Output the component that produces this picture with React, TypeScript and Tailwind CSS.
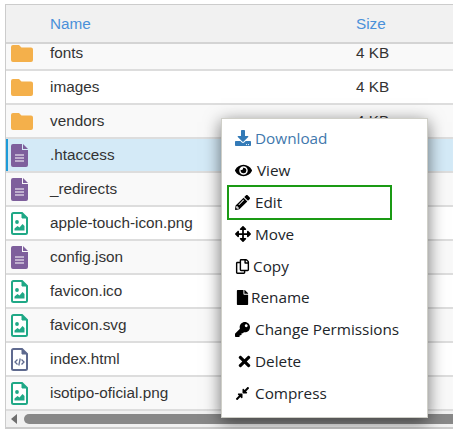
import React from "react";
import { FaDownload, FaEye, FaPencilAlt, FaArrowsAlt, FaRegCopy, FaFile, FaKey, FaTimes, FaCompressAlt } from "react-icons/fa";

type Kind = "folder" | "text" | "image" | "code";

function FileIcon({ kind }: { kind: Kind }) {
  if (kind === "folder") {
    return (
      <svg width="22" height="17" viewBox="0 0 22 17">
        <path d="M2 0h6l2.5 2.5H20a2 2 0 0 1 2 2V15a2 2 0 0 1-2 2H2a2 2 0 0 1-2-2V2a2 2 0 0 1 2-2z" fill="#f4b04b" />
      </svg>
    );
  }
  if (kind === "text") {
    return (
      <svg width="17" height="23" viewBox="0 0 17 23">
        <path d="M2 0h9v6h6v15a2 2 0 0 1-2 2H2a2 2 0 0 1-2-2V2a2 2 0 0 1 2-2z" fill="#7e5f9c" />
        <path d="M12 0l5 5h-5z" fill="#7e5f9c" />
        <path d="M4 11h9M4 14h9M4 17h9" stroke="#fff" strokeWidth="1.2" />
      </svg>
    );
  }
  const color = kind === "image" ? "#1fa886" : "#5f6a8f";
  return (
    <svg width="17" height="23" viewBox="0 0 17 23">
      <path d="M2.5 1h8.5l5 5v14.5a1.5 1.5 0 0 1-1.5 1.5h-12A1.5 1.5 0 0 1 1 20.5v-18A1.5 1.5 0 0 1 2.5 1z" fill="#fff" stroke={color} strokeWidth="2" />
      <path d="M11 1v5h5" fill={color} stroke={color} strokeWidth="1" />
      {kind === "image" ? (
        <>
          <circle cx="6" cy="10" r="1.9" fill={color} />
          <path d="M3.5 18.5v-2l3-2.5 2 1.5 3-3.5 2 2v4.5z" fill={color} />
        </>
      ) : (
        <path d="M6.5 11.5l-2.5 2.5 2.5 2.5M10.5 11.5l2.5 2.5-2.5 2.5M9.2 10.5l-1.4 7" fill="none" stroke={color} strokeWidth="1.3" />
      )}
    </svg>
  );
}

const rows: { name: string; kind: Kind; size: string; selected?: boolean }[] = [
  { name: "fonts", kind: "folder", size: "4 KB" },
  { name: "images", kind: "folder", size: "4 KB" },
  { name: "vendors", kind: "folder", size: "4 KB" },
  { name: ".htaccess", kind: "text", size: "", selected: true },
  { name: "_redirects", kind: "text", size: "" },
  { name: "apple-touch-icon.png", kind: "image", size: "" },
  { name: "config.json", kind: "text", size: "" },
  { name: "favicon.ico", kind: "image", size: "" },
  { name: "favicon.svg", kind: "image", size: "" },
  { name: "index.html", kind: "code", size: "" },
  { name: "isotipo-oficial.png", kind: "image", size: "" },
];

const menu = [
  { label: "Download", Icon: FaDownload, size: 16, box: "w-[20px]", tone: "text-[#3f78ad]" },
  { label: "View", Icon: FaEye, size: 17, box: "w-[22px]", tone: "text-[#212529]" },
  { label: "Edit", Icon: FaPencilAlt, size: 15, box: "w-[20px]", tone: "text-[#212529]" },
  { label: "Move", Icon: FaArrowsAlt, size: 16, box: "w-[20px]", tone: "text-[#212529]" },
  { label: "Copy", Icon: FaRegCopy, size: 15, box: "w-[18px]", tone: "text-[#212529]" },
  { label: "Rename", Icon: FaFile, size: 15, box: "w-[16px]", tone: "text-[#212529]" },
  { label: "Change Permissions", Icon: FaKey, size: 15, box: "w-[20px]", tone: "text-[#212529]" },
  { label: "Delete", Icon: FaTimes, size: 17, box: "w-[20px] pl-[1px]", tone: "text-[#212529]" },
  { label: "Compress", Icon: FaCompressAlt, size: 15, box: "w-[20px]", tone: "text-[#212529]" },
];

export default function App() {
  return (
    <div className="relative h-[429px] w-[453px] overflow-hidden bg-white pl-[5px] pt-[4px] font-['Liberation_Sans',sans-serif] text-[15.3px] text-[#333]">
      <div className="flex h-[425px] w-[448px] flex-col overflow-hidden border-l border-t border-b-2 border-[#ccc]">
        <div className="z-10 flex h-[39px] shrink-0 items-center border-b-2 border-[#d4d4d4] bg-[#f1f1f1] pt-[2px] text-[#4a90d9]">
          <span className="ml-[44px] w-[306px]">Name</span>
          <span>Size</span>
        </div>
        <div className="-mt-[7px] flex-1 overflow-hidden">
          {rows.map((r, i) => (
            <div
              key={r.name}
              className={
                "flex h-[34px] items-center border-b-2 border-[#ddd] " +
                (r.selected ? "bg-[#d4eaf7]" : i % 2 === 0 ? "bg-[#f9f9f9]" : "bg-white")
              }
            >
              <span className={"flex h-full w-[44px] shrink-0 items-center pl-[3px] " + (r.selected ? "border-l-2 border-[#1d9bd8]" : "border-l-2 border-transparent")}>
                <FileIcon kind={r.kind} />
              </span>
              <span className="w-[306px]">{r.name}</span>
              <span>{r.size}</span>
            </div>
          ))}
        </div>
        <div className="flex h-[16px] shrink-0 items-center bg-[#f1f1f1] pl-[5px]">
          <span className="h-0 w-0 border-y-[5px] border-r-[6px] border-y-transparent border-r-[#6e6e6e]" />
          <span className="ml-[7px] h-[10px] w-[430px] rounded-l-full bg-[#888]" />
        </div>
      </div>

      <div className="absolute left-[221px] top-[118px] w-[207px] border border-[#cfcfc8] bg-white pb-[7.5px] pt-[3.5px] font-['Open_Sans',sans-serif] text-[15.3px] shadow-[0_4px_16px_rgba(0,0,0,0.55)]">
        {menu.map(({ label, Icon, size, box, tone }) => (
          <div key={label} className={"flex h-[31.9px] items-center pl-[13px] " + tone}>
            <span className={"flex shrink-0 " + box}>
              <Icon size={size} className={label === "Download" ? "text-[#337ab7]" : "text-black"} />
            </span>
            <span>{label}</span>
          </div>
        ))}
      </div>
      <div className="absolute left-[227px] top-[185px] h-[35px] w-[165px] border-2 border-[#1a9a14]" />
    </div>
  );
}
